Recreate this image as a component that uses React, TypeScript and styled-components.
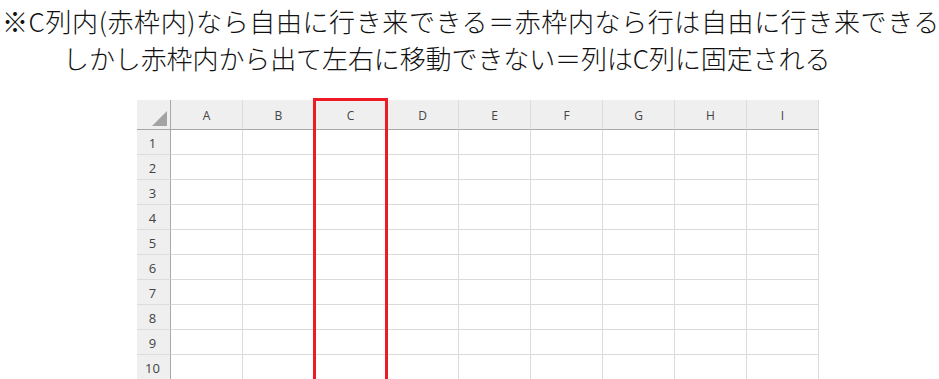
import React from 'react';
import styled, { createGlobalStyle } from 'styled-components';

const GlobalStyle = createGlobalStyle`
  body {
    margin: 0;
    background: #ffffff;
    font-family: "Noto Sans CJK JP", "Noto Sans", sans-serif;
  }
`;

const Page = styled.div`
  width: 939px;
  height: 379px;
  overflow: hidden;
`;

const Caption = styled.div`
  padding: 2px 0 0 2px;
  font-size: 26px;
  font-weight: 300;
  line-height: 37px;
  color: #111;
  white-space: nowrap;
`;

const CaptionLine = styled.div<{ $indent?: number; $spacing?: number }>`
  padding-left: ${(p) => p.$indent || 0}px;
  letter-spacing: ${(p) => p.$spacing || 0}px;
`;

const SheetWrap = styled.div`
  position: relative;
  margin: 24px 0 0 137px;
  width: 682px;
`;

const Sheet = styled.div`
  display: grid;
  grid-template-columns: 34px repeat(9, 72px);
  grid-template-rows: 30px;
  grid-auto-rows: 25px;
  font-family: "Open Sans", "Noto Sans", sans-serif;
  font-size: 12px;
  color: #444;
`;

const Corner = styled.div`
  position: relative;
  background: #efefef;
  border-right: 1px solid #a8a8a8;
  border-bottom: 1px solid #a8a8a8;
  box-sizing: border-box;
`;

const CornerTriangle = styled.div`
  position: absolute;
  right: 3px;
  bottom: 3px;
  width: 0;
  height: 0;
  border-left: 15px solid transparent;
  border-bottom: 15px solid #a3a3a3;
`;

const ColHead = styled.div`
  background: #efefef;
  border-right: 1px solid #dcdcdc;
  border-bottom: 1px solid #a8a8a8;
  box-sizing: border-box;
  display: flex;
  align-items: center;
  justify-content: center;
  padding-top: 1px;
`;

const RowHead = styled.div`
  background: #efefef;
  border-right: 1px solid #a8a8a8;
  border-bottom: 1px solid #dcdcdc;
  box-sizing: border-box;
  display: flex;
  align-items: center;
  justify-content: center;
  padding: 1px 2px 0 0;
  font-size: 13px;
`;

const Cell = styled.div`
  background: #ffffff;
  border-right: 1px solid #dadada;
  border-bottom: 1px solid #dadada;
  box-sizing: border-box;
`;

const RedFrame = styled.div`
  position: absolute;
  left: 176px;
  top: -2px;
  width: 75px;
  height: 300px;
  border: 3px solid #ed1c24;
  box-sizing: border-box;
  pointer-events: none;
`;

const columns = ['A', 'B', 'C', 'D', 'E', 'F', 'G', 'H', 'I'];
const rows = [1, 2, 3, 4, 5, 6, 7, 8, 9, 10];

const App: React.FC = () => (
  <Page>
    <GlobalStyle />
    <Caption>
      <CaptionLine $spacing={0.6}>※C列内(赤枠内)なら自由に行き来できる＝赤枠内なら行は自由に行き来できる</CaptionLine>
      <CaptionLine $indent={61} $spacing={-0.1}>しかし赤枠内から出て左右に移動できない＝列はC列に固定される</CaptionLine>
    </Caption>
    <SheetWrap>
      <Sheet>
        <Corner>
          <CornerTriangle />
        </Corner>
        {columns.map((c) => (
          <ColHead key={c}>{c}</ColHead>
        ))}
        {rows.map((r) => (
          <React.Fragment key={r}>
            <RowHead>{r}</RowHead>
            {columns.map((c) => (
              <Cell key={c + r} />
            ))}
          </React.Fragment>
        ))}
      </Sheet>
      <RedFrame />
    </SheetWrap>
  </Page>
);

export default App;
